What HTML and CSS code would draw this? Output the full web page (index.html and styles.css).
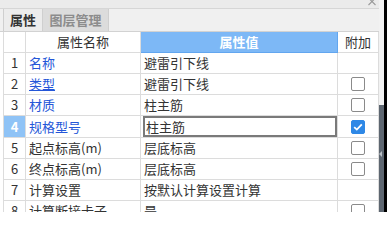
FILE: index.html
```html
<!DOCTYPE html>
<html>
<head>
<meta charset="utf-8">
<link rel="stylesheet" href="styles.css">
</head>
<body>
<div class="screen">
  <div class="panel">
    <div class="titlebar">
      <svg class="close" width="8" height="8" viewBox="0 0 8 8"><path d="M0.5 -2 L7.5 5 M7.5 -2 L0.5 5" stroke="#9a9a9a" stroke-width="1.1" fill="none"/></svg>
    </div>
    <div class="tabs">
      <div class="tab active">属性</div>
      <div class="tab other">图层管理</div>
    </div>
    <table class="grid">
      <colgroup><col class="c-idx"><col class="c-name"><col class="c-val"><col class="c-add"></colgroup>
      <thead>
        <tr><th></th><th>属性名称</th><th class="hl">属性值</th><th>附加</th></tr>
      </thead>
      <tbody>
        <tr><td class="idx">1</td><td class="name link">名称</td><td class="val">避雷引下线</td><td class="add"></td></tr>
        <tr><td class="idx">2</td><td class="name link"><u>类型</u></td><td class="val">避雷引下线</td><td class="add"><span class="cb"></span></td></tr>
        <tr><td class="idx">3</td><td class="name link">材质</td><td class="val">柱主筋</td><td class="add"><span class="cb"></span></td></tr>
        <tr class="sel"><td class="idx">4</td><td class="name link">规格型号</td><td class="val"><div class="edit">柱主筋</div></td><td class="add"><span class="cb on"><svg width="10" height="8" viewBox="0 0 10 8"><path d="M1.2 4.2 L3.8 6.6 L8.8 1.4" stroke="#fff" stroke-width="1.8" fill="none"/></svg></span></td></tr>
        <tr><td class="idx">5</td><td class="name">起点标高(m)</td><td class="val">层底标高</td><td class="add"><span class="cb"></span></td></tr>
        <tr><td class="idx">6</td><td class="name">终点标高(m)</td><td class="val">层底标高</td><td class="add"><span class="cb"></span></td></tr>
        <tr><td class="idx">7</td><td class="name">计算设置</td><td class="val">按默认计算设置计算</td><td class="add"></td></tr>
        <tr><td class="idx">8</td><td class="name">计算断接卡子</td><td class="val">是</td><td class="add"><span class="cb"></span></td></tr>
      </tbody>
    </table>
  </div>
  <div class="side"><div class="thumb"><span class="notch"></span></div></div>
  <div class="edge"></div>
</div>
</body>
</html>
```

FILE: styles.css
```css
html, body {
  margin: 0;
  padding: 0;
  background: #fff;
}
.screen {
  display: flex;
  width: 387px;
  height: 212px;
  overflow: hidden;
  font-family: "Noto Sans CJK SC", "Noto Sans", sans-serif;
  font-size: 13px;
  color: #333;
}
.panel {
  width: 379px;
  height: 212px;
  background: #fff;
  overflow: hidden;
  flex: none;
}
.titlebar {
  height: 8px;
  background: #ebebeb;
  border-bottom: 1px solid #d6d6d6;
  display: flex;
  justify-content: flex-end;
  align-items: flex-start;
  padding-right: 3px;
}
.close {
  display: block;
}
.tabs {
  height: 22px;
  background: #f0f0f0;
  border-bottom: 1px solid #d2d2d2;
  padding-left: 3px;
  display: flex;
}
.tab {
  box-sizing: border-box;
  height: 22px;
  line-height: 22px;
  text-align: center;
  white-space: nowrap;
  font-weight: bold;
  font-size: 13px;
  border-right: 1px solid #cfcfcf;
  flex: none;
}
.tab.active {
  width: 40px;
  background: #ececec;
  color: #333;
  border-left: 1px solid #cfcfcf;
}
.tab.other {
  width: 66px;
  background: #dcdcdc;
  color: #8c8c8c;
}
.grid {
  margin-left: 3px;
  border-collapse: collapse;
  table-layout: fixed;
  width: 375px;
}
.c-idx { width: 22px; }
.c-name { width: 115px; }
.c-val { width: 197px; }
.c-add { width: 41px; }
.grid th, .grid td {
  border: 1px solid #dcdcdc;
  border-top: none;
  height: 20px;
  padding: 0;
  white-space: nowrap;
  overflow: hidden;
  line-height: 20px;
}
.grid th {
  font-weight: normal;
  text-align: center;
  color: #333;
}
.grid th.hl {
  background: #7db8f6;
  color: #fff;
  border: 1px solid #62a6ef;
  border-top: none;
  font-weight: bold;
}
.idx {
  text-align: center;
  color: #333;
}
.name {
  padding-left: 3px !important;
}
.link {
  color: #2456d8;
}
.val {
  padding-left: 3px !important;
}
.add {
  text-align: center;
}
.cb {
  display: inline-flex;
  align-items: center;
  justify-content: center;
  width: 12px;
  height: 12px;
  border: 1px solid #8a8a8a;
  border-radius: 2px;
  background: #fff;
  vertical-align: middle;
  margin-top: -2px;
}
.cb.on {
  background: #2e88e6;
  border-color: #2e88e6;
}
.cb svg {
  display: block;
}
.sel .idx {
  background: #8fc3f6;
  color: #fff;
  font-weight: bold;
}
.sel .val {
  padding: 0 0 0 2px !important;
}
.edit {
  height: 17px;
  line-height: 17px;
  border: 2px solid #7a7a7a;
  padding-left: 1px;
}
.side {
  width: 5px;
  height: 212px;
  background: #f2f2f2;
  display: flex;
  flex-direction: column;
  flex: none;
}
.thumb {
  margin-top: 105px;
  flex: 1;
  background: #5d6670;
  position: relative;
}
.notch {
  position: absolute;
  left: 0;
  top: 46px;
  width: 0;
  height: 0;
  border-top: 3px solid transparent;
  border-bottom: 3px solid transparent;
  border-right: 3px solid #b8bec4;
}
.edge {
  flex: 1;
  background: #000;
}
```
